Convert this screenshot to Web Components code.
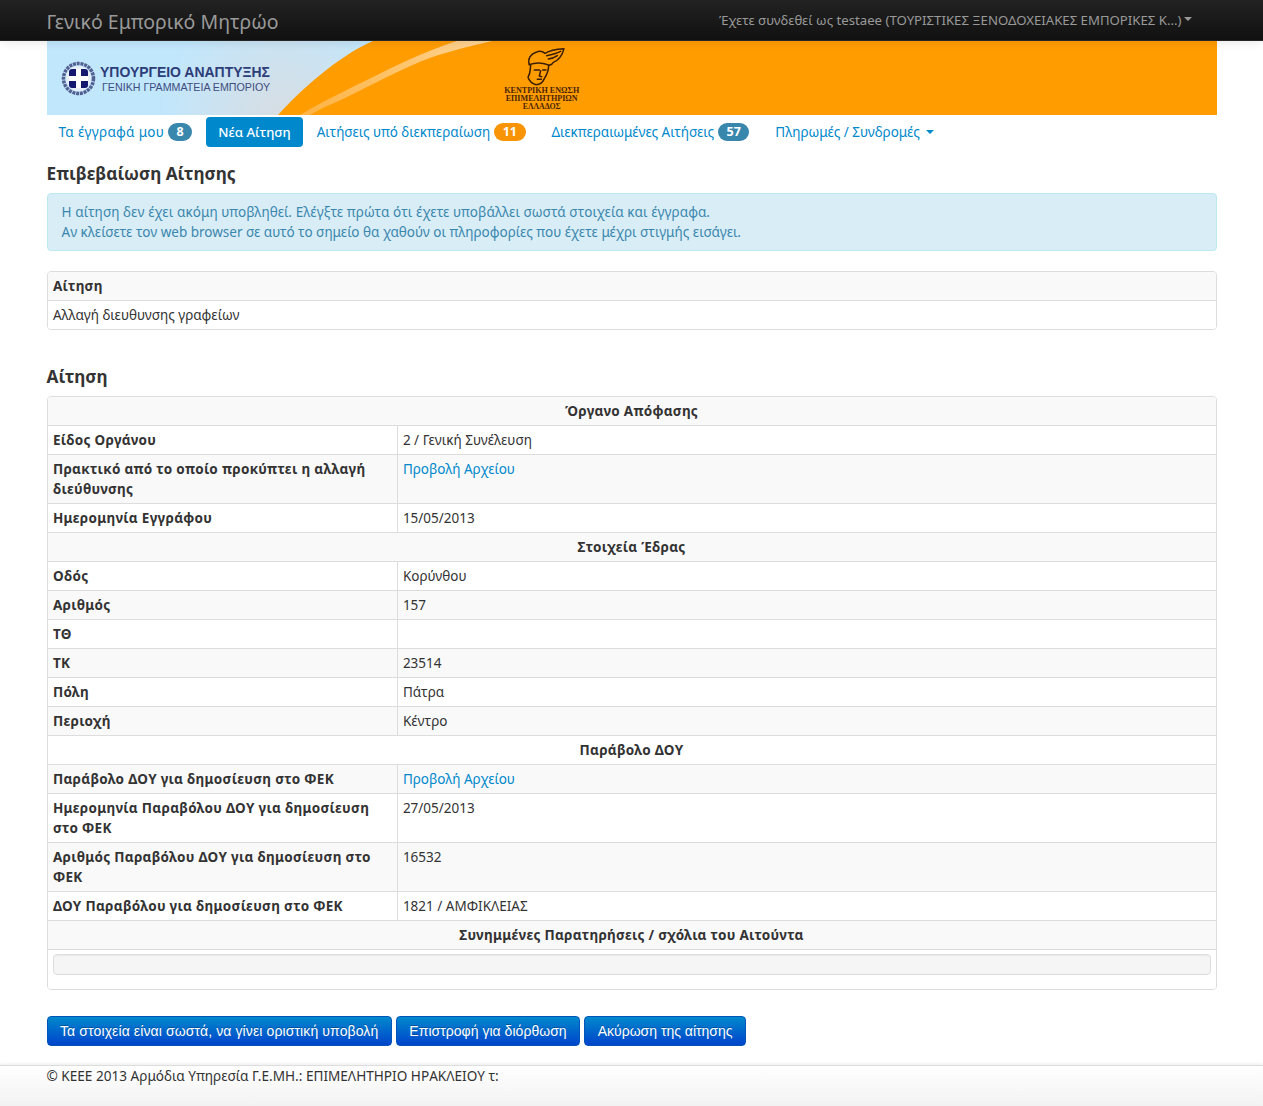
<!DOCTYPE html>
<html lang="el"><head><meta charset="utf-8"><title>Γενικό Εμπορικό Μητρώο</title>
<style>
html,body{margin:0;padding:0;background:#fff}
body{font:13.5px/20px "Noto Sans","Open Sans",sans-serif;color:#333;min-height:1106px;display:flex;flex-direction:column}
</style></head><body>
<app-navbar brand="Γενικό Εμπορικό Μητρώο" user="Έχετε συνδεθεί ως testaee (ΤΟΥΡΙΣΤΙΚΕΣ ΞΕΝΟΔΟΧΕΙΑΚΕΣ ΕΜΠΟΡΙΚΕΣ Κ...)"></app-navbar>
<page-main>
<app-banner></app-banner>
<nav-pills>
<nav-pill badge="8" tone="info" style="letter-spacing:.3px">Τα έγγραφά μου</nav-pill>
<nav-pill active style="font-size:13.2px">Νέα Αίτηση</nav-pill>
<nav-pill badge="11" tone="warn">Αιτήσεις υπό διεκπεραίωση</nav-pill>
<nav-pill badge="57" tone="info" style="letter-spacing:-.05px">Διεκπεραιωμένες Αιτήσεις</nav-pill>
<nav-pill caret>Πληρωμές / Συνδρομές</nav-pill>
</nav-pills>
<page-heading style="margin-top:16px">Επιβεβαίωση Αίτησης</page-heading>
<info-alert><span style="letter-spacing:.07px">Η αίτηση δεν έχει ακόμη υποβληθεί. Ελέγξτε πρώτα ότι έχετε υποβάλλει σωστά στοιχεία και έγγραφα.</span><br>Αν κλείσετε τον web browser σε αυτό το σημείο θα χαθούν οι πληροφορίες που έχετε μέχρι στιγμής εισάγει.</info-alert>
<kv-table style="margin-top:20px">
<kv-row head align="left">Αίτηση</kv-row>
<kv-row full>Αλλαγή διευθυνσης γραφείων</kv-row>
</kv-table>
<page-heading style="margin-top:36px">Αίτηση</page-heading>
<kv-table style="margin-top:9px">
<kv-row head>Όργανο Απόφασης</kv-row>
<kv-row label="Είδος Οργάνου">2 / Γενική Συνέλευση</kv-row>
<kv-row label="Πρακτικό από το οποίο προκύπτει η αλλαγή διεύθυνσης"><file-link>Προβολή Αρχείου</file-link></kv-row>
<kv-row label="Ημερομηνία Εγγράφου">15/05/2013</kv-row>
<kv-row head>Στοιχεία Έδρας</kv-row>
<kv-row label="Οδός">Κορύνθου</kv-row>
<kv-row label="Αριθμός">157</kv-row>
<kv-row label="ΤΘ"></kv-row>
<kv-row label="ΤΚ">23514</kv-row>
<kv-row label="Πόλη">Πάτρα</kv-row>
<kv-row label="Περιοχή">Κέντρο</kv-row>
<kv-row head>Παράβολο ΔΟΥ</kv-row>
<kv-row label="Παράβολο ΔΟΥ για δημοσίευση στο ΦΕΚ"><file-link>Προβολή Αρχείου</file-link></kv-row>
<kv-row label="Ημερομηνία Παραβόλου ΔΟΥ για δημοσίευση στο ΦΕΚ">27/05/2013</kv-row>
<kv-row label="Αριθμός Παραβόλου ΔΟΥ για δημοσίευση στο ΦΕΚ">16532</kv-row>
<kv-row label="ΔΟΥ Παραβόλου για δημοσίευση στο ΦΕΚ">1821 / ΑΜΦΙΚΛΕΙΑΣ</kv-row>
<kv-row head>Συνημμένες Παρατηρήσεις / σχόλια του Αιτούντα</kv-row>
<kv-row full><note-well></note-well></kv-row>
</kv-table>
<action-bar>
<action-button style="letter-spacing:.11px">Τα στοιχεία είναι σωστά, να γίνει οριστική υποβολή</action-button>
<action-button style="letter-spacing:.03px">Επιστροφή για διόρθωση</action-button>
<action-button>Ακύρωση της αίτησης</action-button>
</action-bar>
</page-main>
<app-footer>© ΚΕΕΕ 2013 Αρμόδια Υπηρεσία Γ.Ε.ΜΗ.: ΕΠΙΜΕΛΗΤΗΡΙΟ ΗΡΑΚΛΕΙΟΥ τ:</app-footer>
<script>
function def(name, css, html){
  customElements.define(name, class extends HTMLElement{
    connectedCallback(){
      if(this.shadowRoot) return;
      const r=this.attachShadow({mode:'open'});
      r.innerHTML='<style>'+css+'</style>'+(typeof html==='function'?html(this):html);
    }
  });
}
def('app-navbar',`
:host{display:block;height:41px;background:linear-gradient(#222,#111);border-bottom:1px solid #252525;box-sizing:border-box;box-shadow:0 1px 10px rgba(0,0,0,.1);position:relative;z-index:2}
.in{width:1170px;margin:0 auto;display:flex;justify-content:space-between}
.b{font-size:19.5px;line-height:20px;padding:12px 0 0;color:#999}
.u{font-size:13.2px;line-height:20px;color:#999;margin:10px 25px 0 0;display:flex;align-items:center;height:20px}
.c{width:0;height:0;border:4px solid transparent;border-top-color:#999;border-bottom:0;margin:-2px 0 0 2px}
`,h=>`<div class="in"><span class="b">${h.getAttribute('brand')}</span><span class="u">${h.getAttribute('user')}<i class="c"></i></span></div>`);
def('page-main',`:host{display:block;flex:1;width:1170px;margin:0 auto}`,`<slot></slot>`);
def('app-banner',`:host{display:block;height:74px;background:#c3e7fc}svg{display:block}`,`
<svg width="1170" height="74" viewBox="0 0 1170 74">
<defs><radialGradient id="bg" gradientUnits="userSpaceOnUse" cx="235" cy="78" r="125"><stop offset="0" stop-color="#d8dde2"/><stop offset="1" stop-color="#c1e7fd"/></radialGradient>
<linearGradient id="st" gradientUnits="userSpaceOnUse" x1="253" y1="74" x2="445" y2="0"><stop offset="0" stop-color="#ffb342"/><stop offset=".6" stop-color="#ffc671"/><stop offset="1" stop-color="#ffd79c"/></linearGradient></defs>
<rect width="1170" height="74" fill="#ff9c00"/>
<path d="M0 0H326C298 12 262 40 231 74H0Z" fill="url(#bg)"/>
<path d="M410 0C388 7 362 18 336 31C310 44 280 58 253 74H263C276 66 288 62 300 56L340 36C352 30 363 25 375 20C395 12 420 6 445 0Z" fill="url(#st)"/>
<g transform="translate(31.500 37.500)">
<circle r="15" fill="none" stroke="#54608f" stroke-width="3.500" stroke-dasharray="3 .8"/>
<circle r="12.600" fill="#e8eef6"/>
<rect x="-9.500" y="-9.500" width="19" height="19" rx="3" fill="#14186e"/>
<path d="M-2.500-9.500h5v7h7v5h-7v7h-5v-7h-7v-5h7z" fill="#fff"/>
</g>
<text x="53" y="36" font-family="Liberation Sans" font-weight="700" font-size="14.500" fill="#2d3d78" textLength="170" lengthAdjust="spacingAndGlyphs">ΥΠΟΥΡΓΕΙΟ ΑΝΑΠΤΥΞΗΣ</text>
<text x="55" y="50" font-family="Liberation Sans" font-size="10.500" fill="#3e4c7e" textLength="168" lengthAdjust="spacingAndGlyphs">ΓΕΝΙΚΗ ΓΡΑΜΜΑΤΕΙΑ ΕΜΠΟΡΙΟΥ</text>
<g transform="translate(453 3) scale(.3333)" fill="none" stroke="#3a1d05" stroke-width="4.500" stroke-linejoin="round" stroke-linecap="round">
<path d="M88 62C82 45 92 30 108 25C118 20 128 22 135 28C150 18 170 15 192 14C188 30 178 48 160 55C158 60 152 63 148 64"/>
<path d="M88 62C105 55 130 55 148 64"/>
<path d="M140 35C155 32 170 28 182 22M145 45C155 44 165 40 172 35"/>
<path d="M92 64C90 78 92 88 84 100C88 112 100 120 108 122C118 122 128 116 133 104C142 90 146 78 146 64"/>
<path d="M103 78L118 78M128 78L138 78M122 80L118 96L125 98M112 106L124 106"/>
</g>
<g font-family="Liberation Serif" font-weight="700" font-size="8" fill="#4a2408" text-anchor="middle">
<text x="494.700" y="51.500" textLength="75" lengthAdjust="spacingAndGlyphs">ΚΕΝΤΡΙΚΗ ΕΝΩΣΗ</text>
<text x="494.700" y="59.500" textLength="72" lengthAdjust="spacingAndGlyphs">ΕΠΙΜΕΛΗΤΗΡΙΩΝ</text>
<text x="494.700" y="68" textLength="38" lengthAdjust="spacingAndGlyphs">ΕΛΛΑΔΟΣ</text>
</g>
</svg>`);
def('nav-pills',`:host{display:flex;margin-top:2px;height:30px;gap:2px}`,`<slot></slot>`);
def('nav-pill',`
:host{display:flex;align-items:center;height:30px;box-sizing:border-box;padding:0 12px;border-radius:4px;color:#0088cc;font-size:13.5px;white-space:nowrap}
:host([active]){background:#0088cc;color:#fff;font-weight:500}
.b{display:inline-block;padding:0 8.500px;margin-left:4px;border-radius:9px;font-size:12.500px;font-weight:700;line-height:18px;color:#fff;text-align:center;letter-spacing:0}
.info{background:#3a87ad}.warn{background:#f89406}
.c{display:inline-block;width:0;height:0;border:4px solid transparent;border-top-color:#0088cc;border-bottom:0;margin-left:6px}
`,h=>{const b=h.getAttribute('badge');return `<slot></slot>`+(b?`<span class="b ${h.getAttribute('tone')}">${b}</span>`:'')+(h.hasAttribute('caret')?'<i class="c"></i>':'')});
def('page-heading',`:host{display:block;font-size:17.2px;font-weight:700;line-height:21px;color:#333}`,`<slot></slot>`);
def('info-alert',`:host{display:block;margin-top:9px;padding:8px 14px;background:#d9edf7;border:1px solid #bce8f1;border-radius:4px;color:#3a87ad;font-size:13.5px;line-height:20px}`,`<slot></slot>`);
def('kv-table',`:host{display:block;border:1px solid #ddd;border-radius:4px;overflow:hidden}`,`<slot></slot>`);
def('kv-row',`
:host{display:grid;grid-template-columns:350px 1fr;border-top:1px solid #ddd;background:#fff}
:host(:first-child){border-top:0}
:host(:nth-child(odd)){background:#f9f9f9}
:host([head]),:host([full]){grid-template-columns:1fr}
.l{padding:4px 5px 4px 5.4px;font-weight:700;border-right:1px solid #ddd;letter-spacing:.31px}
.v{padding:4px 5px 4px 5.4px;min-height:20px}
.h{padding:4px 5.4px;font-weight:700;text-align:center;letter-spacing:.3px}
:host([align=left]) .h{text-align:left}
`,h=>h.hasAttribute('head')?`<div class="h"><slot></slot></div>`:h.hasAttribute('full')?`<div class="v"><slot></slot></div>`:`<div class="l">${h.getAttribute('label')}</div><div class="v"><slot></slot></div>`);
def('file-link',`:host{color:#0088cc}`,`<slot></slot>`);
def('note-well',`:host{display:block;height:19px;margin:0 0 10px -.4px;background:#f5f5f5;border:1px solid #ddd;border-radius:4px;box-shadow:inset 0 1px 1px rgba(0,0,0,.05)}`,``);
def('action-bar',`:host{display:flex;gap:4px;margin-top:26px}`,`<slot></slot>`);
def('action-button',`:host{display:block;height:30px;box-sizing:border-box;padding:0 12.5px;font:14px/28px "Liberation Sans",sans-serif;color:#fff;background:linear-gradient(#0088cc,#0044cc);border:1px solid #0055b8;border-radius:4px;text-shadow:0 -1px 0 rgba(0,0,0,.25);white-space:nowrap}`,`<slot></slot>`);
def('app-footer',`:host{display:block;height:41px;box-sizing:border-box;border-top:1px solid #ddd;background:linear-gradient(#fff,#f2f2f2);box-shadow:0 -1px 3px rgba(0,0,0,.08);margin-top:19px}
.in{width:1170px;margin:0 auto;font-size:13.6px;line-height:20px}`,`<div class="in"><slot></slot></div>`);
</script>
</body></html>
